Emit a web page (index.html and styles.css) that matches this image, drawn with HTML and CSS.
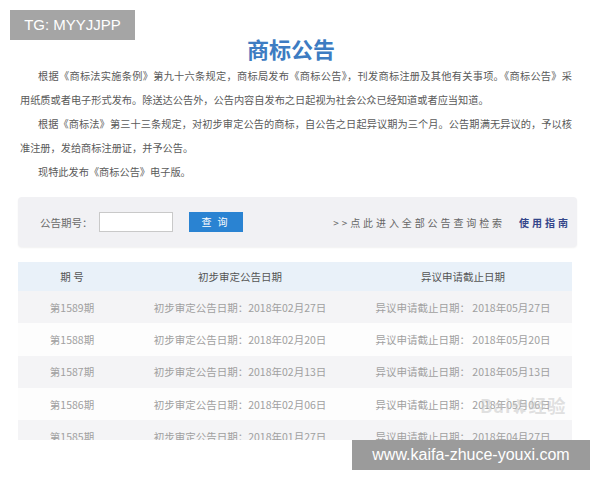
FILE: index.html
```html
<!DOCTYPE html>
<html lang="zh">
<head>
<meta charset="utf-8">
<link rel="stylesheet" href="styles.css">
</head>
<body>
<div class="page">
  <h1 class="title">商标公告</h1>
  <div class="intro">
    <p class="para">
      <span class="ln full first">根据《商标法实施条例》第九十六条规定，商标局发布《商标公告》，刊发商标注册及其他有关事项。《商标公告》采</span>
      <span class="ln">用纸质或者电子形式发布。除送达公告外，公告内容自发布之日起视为社会公众已经知道或者应当知道。</span>
    </p>
    <p class="para">
      <span class="ln full first">根据《商标法》第三十三条规定，对初步审定公告的商标，自公告之日起异议期为三个月。公告期满无异议的，予以核</span>
      <span class="ln">准注册，发给商标注册证，并予公告。</span>
    </p>
    <p class="para">
      <span class="ln first">现特此发布《商标公告》电子版。</span>
    </p>
  </div>

  <div class="search">
    <span class="label">公告期号：</span>
    <span class="input"></span>
    <span class="btn">查 询</span>
    <span class="spacer"></span>
    <span class="all">&gt;&gt;点此进入全部公告查询检索</span>
    <span class="guide">使用指南</span>
  </div>

  <div class="table-wrap">
    <table class="list">
      <colgroup><col class="c1"><col class="c2"><col class="c3"></colgroup>
      <thead>
        <tr><th>期 号</th><th>初步审定公告日期</th><th>异议申请截止日期</th></tr>
      </thead>
      <tbody>
        <tr class="odd"><td>第1589期</td><td>初步审定公告日期：2018年02月27日</td><td>异议申请截止日期： 2018年05月27日</td></tr>
        <tr><td>第1588期</td><td>初步审定公告日期：2018年02月20日</td><td>异议申请截止日期： 2018年05月20日</td></tr>
        <tr class="odd"><td>第1587期</td><td>初步审定公告日期：2018年02月13日</td><td>异议申请截止日期： 2018年05月13日</td></tr>
        <tr><td>第1586期</td><td>初步审定公告日期：2018年02月06日</td><td>异议申请截止日期： 2018年05月06日</td></tr>
        <tr class="odd"><td>第1585期</td><td>初步审定公告日期：2018年01月27日</td><td>异议申请截止日期： 2018年04月27日</td></tr>
      </tbody>
    </table>
    <div class="bd-mark">Bai<span class="paw">✿</span>经验</div>
  </div>
</div>

<div class="badge">TG: MYYJJPP</div>
<div class="site">www.kaifa-zhuce-youxi.com</div>
</body>
</html>
```

FILE: styles.css
```css
html, body {
  margin: 0;
  padding: 0;
  background: #ffffff;
}
body {
  width: 600px;
  height: 480px;
  overflow: hidden;
  position: relative;
  font-family: "Noto Sans CJK SC", "Noto Sans", sans-serif;
}
.page {
  padding: 0 26px 0 18px;
}
.title {
  margin: 35px 0 3px 0;
  font-size: 22px;
  line-height: 26px;
  font-weight: 700;
  color: #3d7cc2;
  text-align: center;
  padding-right: 10px;
}
.intro {
  padding: 0 2px 0 2px;
}
.para {
  margin: 0;
  font-size: 10.2px;
  line-height: 24px;
  color: #5a5a5a;
}
.ln {
  display: block;
  white-space: nowrap;
}
.ln.first {
  padding-left: 18px;
}
.ln.full {
  text-align: justify;
  text-align-last: justify;
}
.search {
  margin-top: 13px;
  height: 50px;
  background: #f1f1f4;
  border-radius: 4px;
  box-shadow: 0 1px 2px rgba(0,0,0,0.06);
  display: flex;
  align-items: center;
  padding: 0 6px 0 22px;
  margin-right: -3px;
  font-size: 10.5px;
  color: #666;
}
.label {
  color: #6a6a6a;
}
.input {
  width: 72px;
  height: 18px;
  margin-left: 6px;
  background: #fff;
  border: 1px solid #c9c9c9;
}
.btn {
  margin-left: 16px;
  width: 54px;
  height: 20px;
  line-height: 20px;
  text-align: center;
  background: #2a83d2;
  color: #fff;
  font-size: 10px;
  letter-spacing: 2px;
}
.spacer {
  flex: 1;
}
.all {
  font-size: 10px;
  letter-spacing: 2.9px;
  color: #666;
}
.guide {
  margin-left: 14px;
  font-size: 10px;
  letter-spacing: 3px;
  color: #34468a;
  font-weight: 700;
}
.table-wrap {
  margin-top: 15px;
  height: 178px;
  overflow: hidden;
  position: relative;
}
.list {
  width: 554px;
  border-collapse: collapse;
  table-layout: fixed;
  font-size: 10.5px;
}
.c1 { width: 108px; }
.c2 { width: 228px; }
.c3 { width: 218px; }
.list th {
  height: 29px;
  padding: 0;
  background: #e9f1f9;
  color: #555;
  font-weight: 400;
  text-align: center;
}
.list td {
  height: 32.3px;
  padding: 0;
  text-align: center;
  color: #a0a0a0;
  background: #fdfdfd;
  white-space: nowrap;
}
.list tr.odd td {
  background: #f4f4f6;
}
.bd-mark {
  position: absolute;
  left: 462px;
  top: 130px;
  font-size: 18px;
  color: rgba(200,200,200,0.55);
  font-weight: 700;
  letter-spacing: 1px;
}
.paw {
  font-size: 16px;
}
.badge {
  position: absolute;
  left: 10px;
  top: 10px;
  width: 125px;
  height: 30px;
  line-height: 30px;
  text-align: center;
  background: #a5a5a5;
  color: #fff;
  font-family: "Liberation Sans", Arial, sans-serif;
  font-size: 15px;
}
.site {
  position: absolute;
  left: 352px;
  top: 440px;
  width: 238px;
  height: 30px;
  line-height: 30px;
  text-align: center;
  background: #9b9b9b;
  color: #fff;
  font-family: "Liberation Sans", Arial, sans-serif;
  font-size: 16px;
}
```
